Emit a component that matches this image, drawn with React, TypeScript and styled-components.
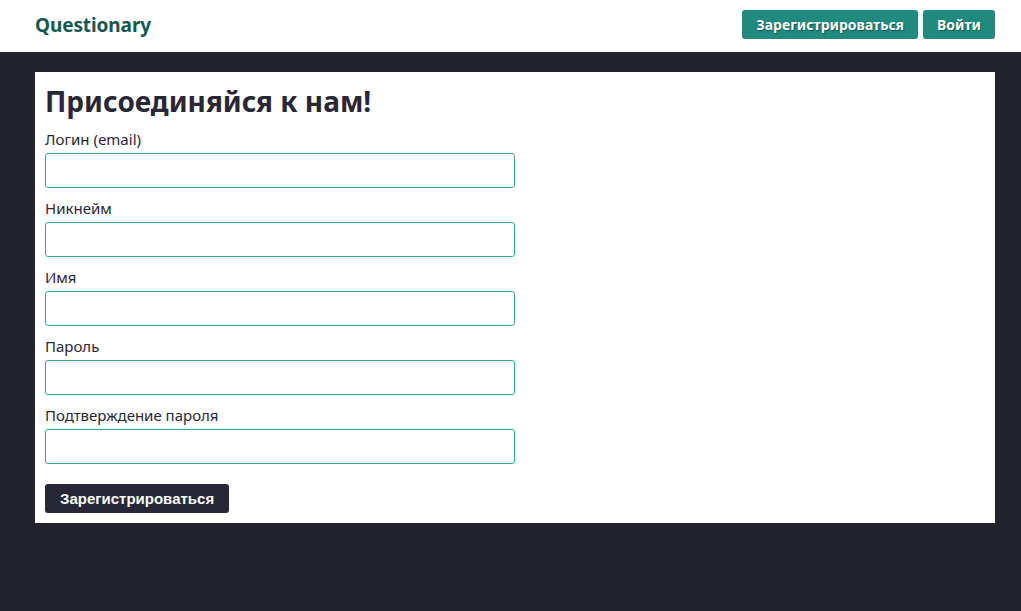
import React from 'react';
import styled, { createGlobalStyle } from 'styled-components';

const GlobalStyle = createGlobalStyle`
  html, body {
    margin: 0;
    padding: 0;
    background: #23232d;
    font-family: 'Noto Sans', 'Open Sans', sans-serif;
  }
  * { box-sizing: border-box; }
`;

const fields = ['Логин (email)', 'Никнейм', 'Имя', 'Пароль', 'Подтверждение пароля'];

const App: React.FC = () => {
  return (
    <>
      <GlobalStyle />
      <Header>
        <Logo>Questionary</Logo>
        <Nav>
          <NavButton>Зарегистрироваться</NavButton>
          <NavButton>Войти</NavButton>
        </Nav>
      </Header>
      <Main>
        <Card>
          <Title>Присоединяйся к нам!</Title>
          <Form onSubmit={(e) => e.preventDefault()}>
            {fields.map((f) => (
              <Field key={f}>
                <Label>{f}</Label>
                <Input type="text" />
              </Field>
            ))}
            <Submit type="submit">Зарегистрироваться</Submit>
          </Form>
        </Card>
      </Main>
    </>
  );
};

const Header = styled.header`
  height: 52px;
  background: #ffffff;
  display: flex;
  align-items: center;
  justify-content: space-between;
  padding: 0 26px 0 35px;
`;

const Logo = styled.div`
  font-size: 19px;
  font-weight: 700;
  color: #14574f;
  letter-spacing: -0.1px;
  margin-top: -2px;
`;

const Nav = styled.nav`
  display: flex;
  gap: 5px;
  margin-top: -3px;
`;

const NavButton = styled.button`
  height: 29px;
  padding: 0 14px;
  border: none;
  border-radius: 3px;
  background: #1f8a7d;
  color: #ffffff;
  font-family: inherit;
  font-size: 14px;
  font-weight: 700;
  text-shadow: 1px 1px 1px rgba(0, 0, 0, 0.35);
  cursor: pointer;
`;

const Main = styled.main`
  padding: 20px 26px 20px 35px;
`;

const Card = styled.section`
  background: #ffffff;
  padding: 10px 10px 10px;
  color: #272735;
`;

const Title = styled.h1`
  margin: 0 0 7px;
  font-size: 28px;
  font-weight: 700;
  line-height: 38px;
  padding-bottom: 2px;
  color: #272735;
`;

const Form = styled.form`
  display: flex;
  flex-direction: column;
  align-items: flex-start;
`;

const Field = styled.div`
  display: flex;
  flex-direction: column;
  margin-bottom: 10px;
`;

const Label = styled.label`
  font-size: 15px;
  line-height: 20px;
  margin-bottom: 4px;
  color: #272735;
`;

const Input = styled.input`
  width: 470px;
  height: 35px;
  border: 1px solid #3aa99b;
  border-radius: 3px;
  outline: none;
  padding: 0 8px;
  font-size: 15px;
`;

const Submit = styled.button`
  margin-top: 10px;
  height: 29px;
  padding: 0 15px;
  border: none;
  border-radius: 3px;
  background: #272735;
  color: #ffffff;
  font-family: 'Liberation Sans', Arial, sans-serif;
  font-size: 15px;
  font-weight: 700;
  cursor: pointer;
`;

export default App;
